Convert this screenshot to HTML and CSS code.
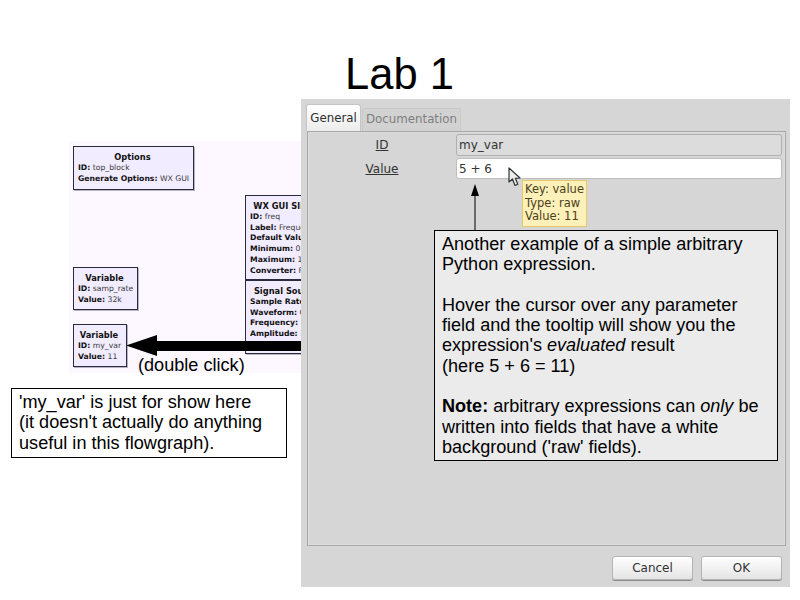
FILE: index.html
```html
<!DOCTYPE html>
<html lang="en">
<head>
<meta charset="utf-8">
<title>Lab 1</title>
<link rel="stylesheet" href="styles.css">
</head>
<body>
<main class="slide">
  <h1 class="title">Lab 1</h1>

  <section class="canvas">
    <div class="block b-options">
      <div class="b-title">Options</div>
      <div><b>ID:</b> top_block</div>
      <div><b>Generate Options:</b> WX GUI</div>
    </div>
    <div class="block b-slider">
      <div class="b-title">WX GUI Slider</div>
      <div><b>ID:</b> freq</div>
      <div><b>Label:</b> Frequency</div>
      <div><b>Default Value:</b> 1k</div>
      <div><b>Minimum:</b> 0</div>
      <div><b>Maximum:</b> 16k</div>
      <div><b>Converter:</b> Float</div>
    </div>
    <div class="block b-source">
      <div class="b-title">Signal Source</div>
      <div><b>Sample Rate:</b> 32k</div>
      <div><b>Waveform:</b> Cosine</div>
      <div><b>Frequency:</b> 1k</div>
      <div><b>Amplitude:</b> 1</div>
      <div class="b-faint"><b>Offset:</b> 0</div>
    </div>
    <div class="block b-rate">
      <div class="b-title">Variable</div>
      <div><b>ID:</b> samp_rate</div>
      <div><b>Value:</b> 32k</div>
    </div>
    <div class="block b-var">
      <div class="b-title">Variable</div>
      <div><b>ID:</b> my_var</div>
      <div><b>Value:</b> 11</div>
    </div>
  </section>

  <section class="dialog">
    <div class="tabs">
      <div class="tab tab-on">General</div>
      <div class="tab tab-off">Documentation</div>
    </div>
    <div class="panel">
      <div class="row">
        <span class="label">ID</span>
        <span class="field field-ro">my_var</span>
      </div>
      <div class="row">
        <span class="label">Value</span>
        <span class="field">5 + 6</span>
      </div>
    </div>
    <div class="actions">
      <button class="btn">Cancel</button>
      <button class="btn">OK</button>
    </div>
  </section>

  <svg class="cursor" width="14" height="20" viewBox="0 0 14 20">
    <path d="M1 1 L1 15 L4.500 12 L7 18.500 L9.800 17.300 L7.300 11.300 L12 11 Z" fill="#ececec" stroke="#2e3436" stroke-width="1.200" stroke-linejoin="round"/>
  </svg>

  <div class="tooltip">Key: value<br>Type: raw<br>Value: 11</div>

  <svg class="pointer" width="16" height="47" viewBox="0 0 16 47">
    <path d="M8 9 V47" stroke="#000" stroke-width="1"/>
    <path d="M8 0 L12 12 L4 12 Z" fill="#000"/>
  </svg>

  <div class="callout">
    <p>Another example of a simple arbitrary<br>Python expression.</p>
    <p>Hover the cursor over any parameter<br>field and the tooltip will show you the<br>expression's <i>evaluated</i> result<br>(here 5 + 6 = 11)</p>
    <p><b>Note:</b> arbitrary expressions can <i>only</i> be<br>written into fields that have a white<br>background ('raw' fields).</p>
  </div>

  <svg class="big-arrow" width="175" height="21" viewBox="0 0 175 21">
    <path d="M0 10.500 L31 0 V6 H175 V16 H31 V21 Z" fill="#000"/>
  </svg>
  <div class="dbl">(double click)</div>

  <div class="note">'my_var' is just for show here<br>(it doesn't actually do anything<br>useful in this flowgraph).</div>
</main>
</body>
</html>
```
FILE: styles.css
```css
* { box-sizing: border-box; }
html, body { margin: 0; padding: 0; background: #fff; }
.slide {
  position: relative;
  width: 800px;
  height: 600px;
  overflow: hidden;
  font-family: "Liberation Sans", Arial, sans-serif;
  color: #000;
}
.title {
  position: absolute;
  left: 345px;
  top: 49px;
  margin: 0;
  font-size: 43.500px;
  line-height: 50px;
  font-weight: 400;
}

/* flowgraph canvas */
.canvas {
  position: absolute;
  left: 69px;
  top: 141px;
  width: 232px;
  height: 232px;
  overflow: hidden;
  background: #fdf8ff;
}
.block {
  position: absolute;
  padding: 5px 3px 0 4px;
  background: #f1ecff;
  border: 1px solid #2b2b40;
  box-shadow: 1px 1px 0 #b8b4c4;
  font-family: "DejaVu Sans", sans-serif;
  font-size: 7.700px;
  line-height: 10.800px;
  color: #3a3a3a;
  white-space: nowrap;
}
.block b { color: #111; }
.b-title {
  padding-right: 3px;
  font-size: 8.300px;
  font-weight: 700;
  color: #111;
  text-align: center;
}
.b-faint { opacity: 0.25; }
.b-options { left: 4px; top: 5px; width: 121px; height: 44px; }
.b-slider { left: 176px; top: 54px; width: 84px; height: 85px; }
.b-source { left: 176px; top: 139px; width: 84px; height: 74px; }
.b-rate { left: 4px; top: 126px; width: 65px; height: 43px; }
.b-var { left: 4px; top: 183px; width: 54px; height: 43px; }

/* parameter dialog */
.dialog {
  position: absolute;
  left: 301px;
  top: 99px;
  width: 489px;
  height: 488px;
  display: flex;
  flex-direction: column;
  padding: 4px 4px 0 6px;
  background: #d6d6d6;
  font-family: "DejaVu Sans", sans-serif;
  font-size: 12px;
  color: #3c3c3c;
}
.tabs {
  display: flex;
  align-items: flex-end;
  gap: 1px;
  height: 28px;
  margin-left: -1px;
  font-size: 11.800px;
}
.tab { display: flex; align-items: center; justify-content: center; }
.tab-on {
  width: 55px;
  height: 27px;
  padding-bottom: 1px;
  background: linear-gradient(#ffffff, #ececec);
  border: 1px solid #c4c4c4;
  border-bottom: 0;
  border-radius: 3px 3px 0 0;
  color: #2e2e2e;
}
.tab-off {
  width: 99px;
  height: 23px;
  padding-bottom: 2px;
  background: #d2d2d2;
  border: 1px solid #c8c8c8;
  border-bottom: 0;
  border-radius: 2px 2px 0 0;
  color: #7e7e7e;
}
.panel {
  height: 415px;
  display: flex;
  flex-direction: column;
  gap: 2px;
  padding: 2px 3px 0 0;
  border: 1px solid #a8a8a8;
  box-shadow: inset 0 0 0 1px #dcdcdc;
}
.row { display: flex; align-items: center; }
.label {
  width: 148px;
  text-align: center;
  text-decoration: underline;
  color: #333;
}
.field {
  flex: 1;
  height: 21px;
  padding: 0 2px;
  display: flex;
  align-items: center;
  background: #fff;
  border: 1px solid #bdbdbd;
  border-radius: 3px;
  color: #333;
}
.field-ro { background: #dcdcdc; border-color: #b0b0b0; height: 22px; }
.actions {
  display: flex;
  justify-content: flex-end;
  gap: 8px;
  padding: 10px 4px 0 0;
}
.btn {
  width: 81px;
  height: 24px;
  padding: 0;
  font: inherit;
  color: #333;
  background: linear-gradient(#ffffff, #e4e4e4);
  border: 1px solid #b4b4b4;
  border-radius: 3px;
  box-shadow: 0 1px 0 #8c8c8c;
}

/* overlays */
.cursor { position: absolute; left: 508px; top: 167px; }
.tooltip {
  position: absolute;
  left: 522px;
  top: 180px;
  width: 65px;
  height: 47px;
  padding: 2px 0 0 2px;
  background: #fdf0b8;
  border: 1px solid #e3c96c;
  font-family: "DejaVu Sans", sans-serif;
  font-size: 11.500px;
  line-height: 13.500px;
  white-space: nowrap;
  color: #4a4020;
}
.pointer { position: absolute; left: 467px; top: 184px; }
.callout {
  position: absolute;
  left: 434px;
  top: 230px;
  width: 344px;
  height: 231px;
  padding: 3px 0 0 7px;
  background: #ebebeb;
  border: 1px solid #000;
  font-size: 18.080px;
  line-height: 20.300px;
}
.callout p { margin: 0 0 20.300px; }
.big-arrow { position: absolute; left: 126px; top: 335px; }
.dbl {
  position: absolute;
  left: 138px;
  top: 355px;
  font-size: 18.130px;
  line-height: 21px;
}
.note {
  position: absolute;
  left: 11px;
  top: 388px;
  width: 276px;
  height: 70px;
  padding: 3px 0 0 7px;
  background: #fff;
  border: 1px solid #000;
  font-size: 18.130px;
  line-height: 20.300px;
}
```
